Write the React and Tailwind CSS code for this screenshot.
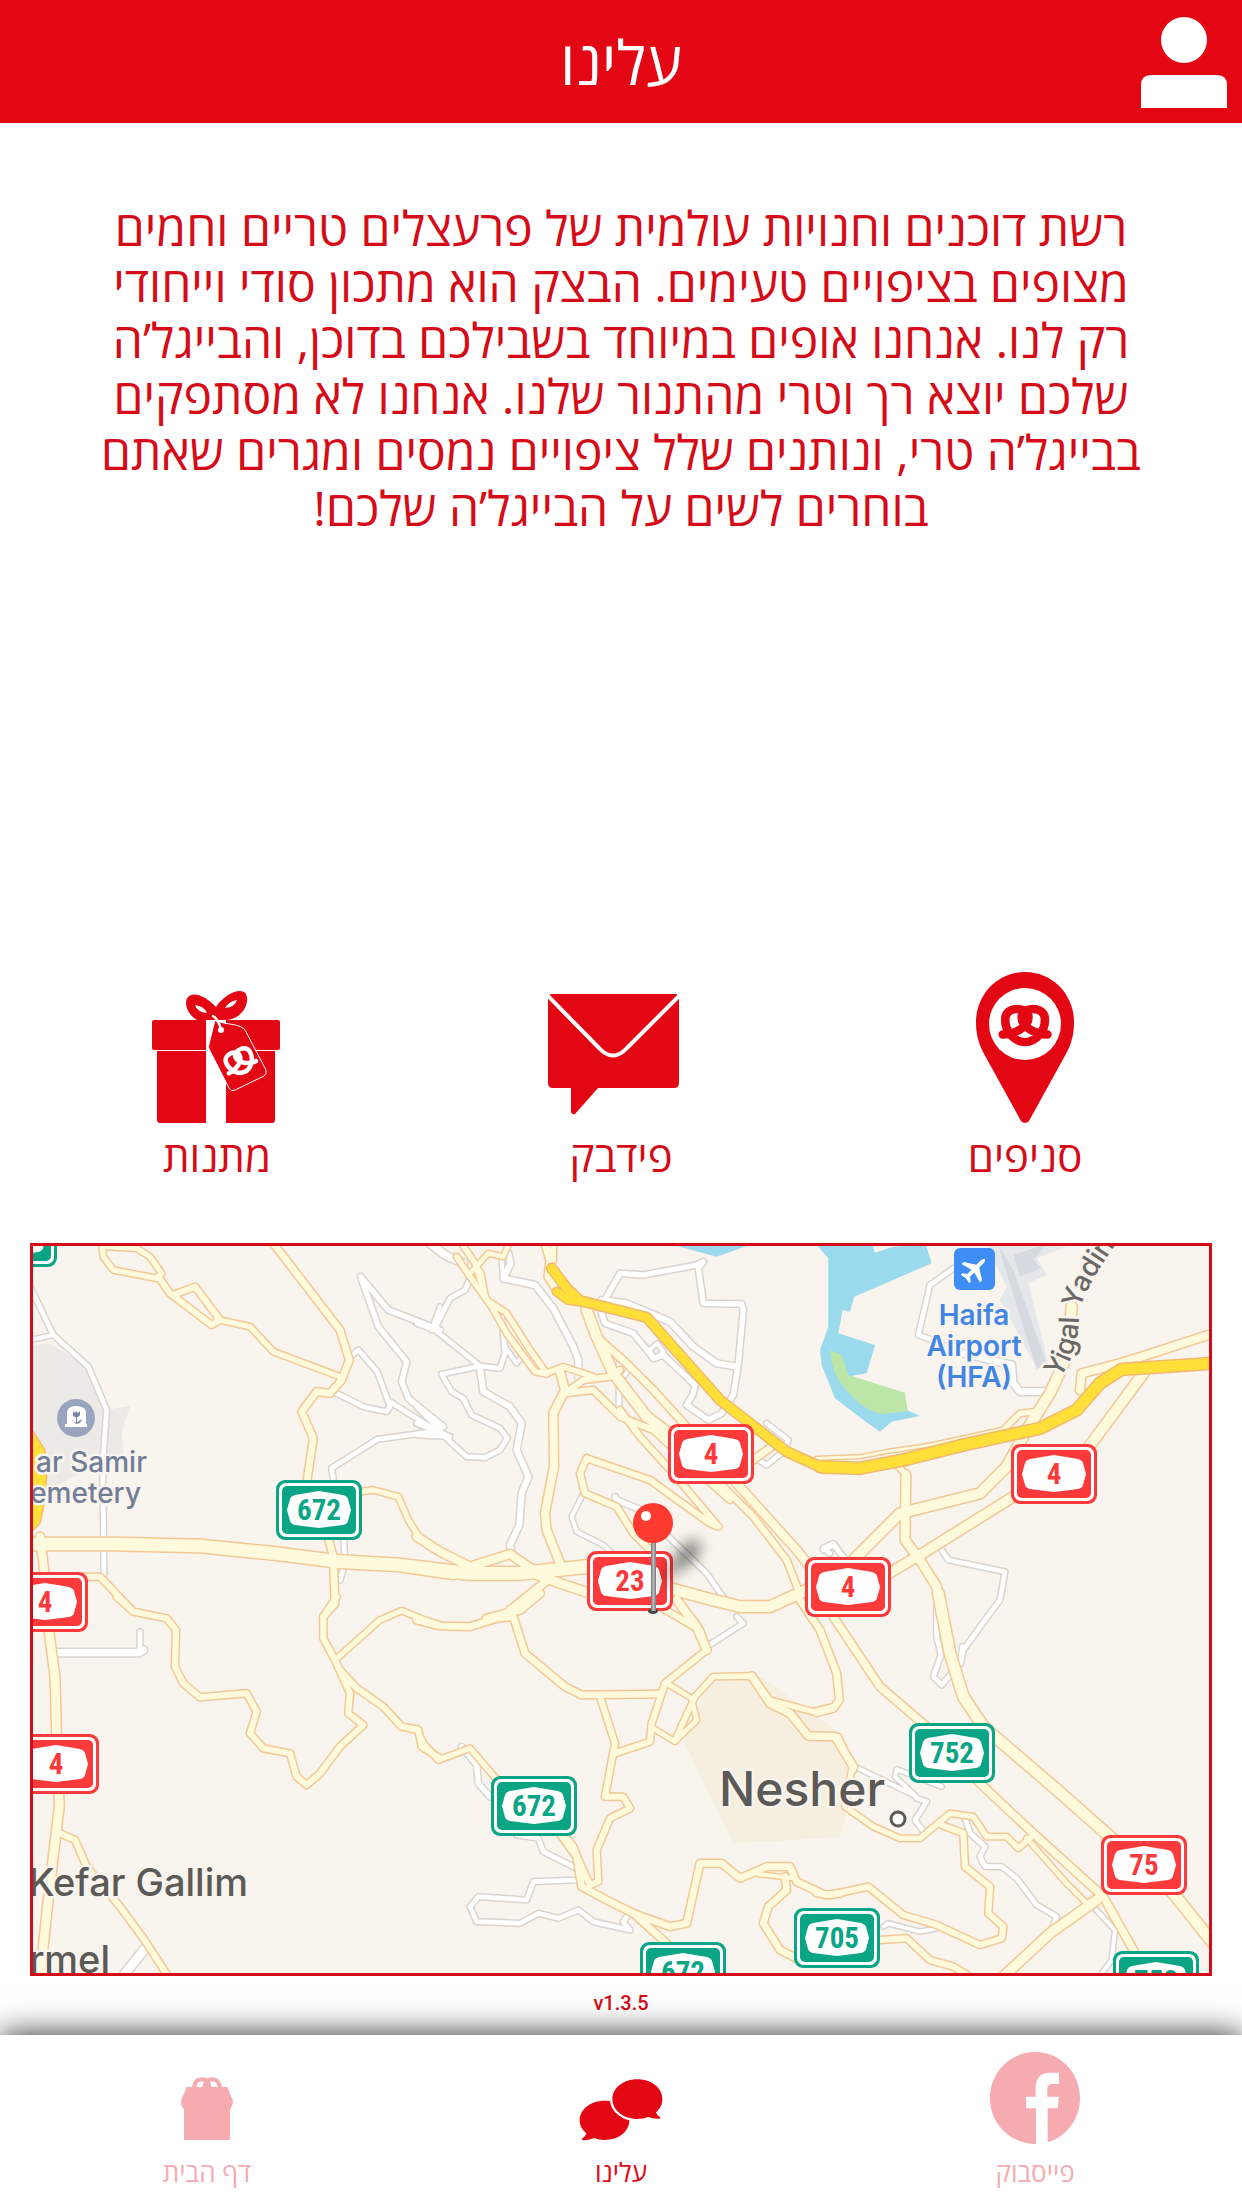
import React from "react";

/* ---------- map data: three drawing units per map pixel ---------- */
const A = [-39, -48];
const B = [1161, -48];
const C = [2361, -48];
const D = [-39, 1062];
const E = [1161, 1062];
const F = [2361, 1062];

const minorRoads = [
  [A, 14, "30 170 100 315 205 410 260 540 248 700 252 1035"],
  [A, 12, "30 330 100 315"],
  [A, 16, "1260 300 1105 240 1022 140 1075 290 1160 395 1145 455 1165 505 1270 590"],
  [A, 14, "985 385 1015 360 1072 425 1110 530 1100 545 1030 530 950 490"],
  [A, 14, "1110 515 1250 603 1072 628 935 715 940 745"],
  [A, 14, "970 900 975 1000 960 1050"],
  [A, 12, "1235 300 1260 230"],
  [B, 22, "30 40 75 75 130 100"],
  [B, 14, "150 145 135 180 90 205 45 295"],
  [B, 14, "-10 280 45 300 180 408 240 415 255 370 245 260"],
  [B, 12, "255 350 290 400 310 375"],
  [B, 14, "180 408 65 433 95 485 130 505 155 555 240 595 262 625 240 660 195 683 140 680 90 635 50 590 -10 530"],
  [B, 14, "-10 580 90 620 -10 615"],
  [B, 18, "180 415 190 485 270 530 305 580 290 660 325 740 305 790 298 885 270 945 275 970"],
  [B, 18, "265 70 272 100 250 145 345 165 400 235 460 350 475 390 475 440"],
  [B, 12, "245 90 250 150"],
  [B, 16, "560 200 600 130 670 135 830 105 850 95 835 115 850 220 965 222 970 240 955 400 940 495 905 550 865 570 800 525 820 490 825 465 730 375 700 385 685 365 640 310 555 280 545 250"],
  [B, 18, "545 210 620 220 750 275 820 350 890 400 950 410"],
  [B, 12, "700 380 688 360 712 340 730 365 710 385"],
  [B, 14, "597 400 597 540"],
  [B, 10, "605 450 625 420"],
  [B, 16, "700 855 590 810 585 800"],
  [B, 12, "490 790 455 860 470 905 550 945 575 970"],
  [B, 14, "740 915 860 1030 915 1110"],
  [B, 14, "1040 580 1105 630 1090 665 1040 705 1015 690"],
  [B, 14, "1230 970 1210 955 1240 940 1265 975"],
  [C, 14, "400 115 330 165 295 315 350 335 400 360"],
  [C, 20, "430 370 575 405 580 460 600 485 690 485"],
  [C, 14, "10 960 40 945 75 985"],
  [C, 14, "365 960 385 990 555 1025 540 1110 495 1170 430 1260 422 1300"],
  [D, 22, "100 158 355 158 370 150"],
  [D, 14, "360 150 360 95"],
  [D, 26, "380 1040 315 1120"],
  [E, 16, "125 440 170 495 175 550 210 590"],
  [E, 14, "290 705 355 715 370 755 470 805"],
  [E, 14, "470 840 340 845 320 900 175 890 150 920 170 965 300 970 355 940 415 955 475 930 520 965 630 990 610 965 628 940"],
  [E, 14, "950 50 970 70 860 140"],
  [F, 14, "350 20 350 110 363 165 340 230 365 255 390 225 420 190 428 140"],
  [F, 12, "105 500 290 590 225 530 230 508 365 560"],
  [F, 14, "290 595 320 605 285 660 315 700"],
  [F, 14, "435 655 450 700 495 740 480 770 495 800 545 800 590 835 650 915 710 950 695 990"],
  [F, 12, "190 980 205 970 300 995 350 985"],
  [F, 12, "815 915 885 990 875 1080 845 1120"],
];

const mainRoads = [
  [A, 16, "245 40 250 80 280 120 410 145 425 130 390 80 350 55 260 50"],
  [A, 18, "415 140 450 190 575 285 600 270 525 170 460 195"],
  [A, 16, "590 268 690 290 760 365 960 440"],
  [A, 20, "760 40 960 300 988 390 965 450 930 490 890 485 845 545 880 625 860 760"],
  [A, 38, "30 942 280 942 540 948 760 970 960 995 1140 1005 1300 1028"],
  [A, 24, "60 920 75 1040"],
  [A, 18, "90 1040 240 1040 335 1140"],
  [A, 16, "1020 785 1060 780 1135 800 1165 870 1200 925 1280 975"],
  [A, 20, "925 925 940 980 945 1120 910 1160"],
  [B, 38, "-20 1010 140 1030 300 1030 500 1010 560 1020"],
  [B, 24, "-10 920 60 965 150 1010 270 972 340 1020"],
  [B, 16, "125 40 165 100 200 210 260 250 330 360 380 430 430 410 520 440"],
  [B, 16, "110 80 150 140 215 230 260 310 345 425 380 432"],
  [B, 14, "150 130 205 70 250 80 265 45"],
  [B, 12, "140 60 185 130 195 190"],
  [B, 22, "375 40 390 90 385 140 410 180"],
  [B, 16, "400 40 400 90"],
  [B, 24, "420 425 435 480 400 550 402 710 375 850 380 900 420 1000"],
  [B, 18, "435 490 490 450 570 440 600 420"],
  [B, 18, "435 490 520 480 600 560 700 600 830 720 930 810"],
  [B, 30, "500 240 530 320 580 430 680 560 760 620"],
  [B, 20, "540 330 620 400 700 480 800 590"],
  [B, 18, "600 540 660 620 760 730 895 890 870 880 690 750 500 685 480 730 495 790 590 830 640 910 700 970"],
  [B, 18, "900 760 1000 860 1100 990 1135 1080"],
  [B, 24, "950 760 1040 860 1130 960 1200 1050"],
  [B, 20, "1000 690 1055 650"],
  [B, 26, "340 1030 420 1060 510 1090"],
  [B, 22, "390 1045 270 1140"],
  [B, 32, "750 1075 860 1105 960 1130 1050 1130 1160 1080"],
  [C, 30, "100 990 240 850 480 790 560 710 620 600 690 490 745 370 755 230"],
  [C, 28, "190 1040 300 975 580 800"],
  [C, 30, "800 660 970 430"],
  [C, 26, "258 735 255 930 300 990 350 1070 365 1160"],
  [C, 16, "225 700 260 735"],
  [C, 16, "550 600 600 550 650 545 690 480"],
  [C, 24, "780 480 785 430 900 400 980 375 1180 310"],
  [C, 8, "-10 685 120 680 200 665 330 645 560 595"],
  [D, 26, "85 80 105 230 110 420 118 620 90 850 60 1130"],
  [D, 18, "290 -10 340 35 440 55 468 90 465 200 490 250 540 292 680 280 710 335 690 400 730 445 810 460 830 530 860 555 900 520 960 440 1030 375 985 340 990 280 945 180 910 115 910 50 950 -10"],
  [D, 16, "945 180 1080 60 1145 32 1200 55 1260 75"],
  [D, 18, "960 210 1010 265 1090 320 1145 380 1195 390 1205 440 1260 475"],
  [D, 18, "120 700 165 720 200 800 300 920 370 1015 445 1130"],
  [E, 20, "-10 60 60 78 150 80 230 55 280 50 315 160 435 260 485 285 720 282"],
  [E, 22, "200 55 300 30 360 -20"],
  [E, 18, "540 290 585 430 555 590 610 590 630 625 570 655 530 750 535 845 510 855 480 790 460 740 420 690"],
  [E, 18, "585 460 690 425 695 370 735 250 860 150 840 90 720 20"],
  [E, 24, "770 0 830 80 860 150"],
  [E, 14, "740 250 815 295 830 360 765 425 700 385"],
  [E, 16, "765 420 825 290 880 230 995 228 1050 300 1180 335 1240 320"],
  [E, 22, "995 228 1050 310 1110 340 1165 408 1245 410 1300 500"],
  [E, 16, "-10 385 10 430 55 480 150 445 240 550"],
  [E, 20, "420 700 470 770 485 860 560 900 640 940 750 980 800 970 840 790 905 790 960 835 1040 800 1110 800 1130 845 1215 885 1260 880"],
  [E, 12, "1000 820 1120 835"],
  [E, 20, "1095 830 1100 870 1045 920 1030 970 1080 1050 1130 1075"],
  [E, 20, "640 940 740 1030"],
  [E, 20, "1140 0 1200 90 1250 220 1258 300 1240 325 1190 338"],
  [F, 22, "40 50 180 260 320 380 480 550 640 700 850 890 940 1050"],
  [F, 32, "355 -20 390 160 430 290 490 380 700 560 870 710 1060 880 1180 1030"],
  [F, 16, "95 510 75 620 160 680 240 715 300 715 390 640 460 650 500 710 560 710 595 745 640 705"],
  [F, 14, "620 715 740 850 800 910 840 890"],
  [F, 28, "550 1130 690 1000 830 900"],
  [F, 18, "365 675 430 700 435 800 510 860 505 940 550 980 545 1015 480 1035 350 975 250 945 145 860 30 885 -10 880"],
  [F, 18, "180 1020 260 1015 330 1080 400 1100 450 1130"],
  [F, 16, "55 410 100 510"],
];

const highways = [
  [B, 26, "395 115 440 175 480 212 680 262 900 510 1100 665 1210 715 1320 715"],
  [B, 22, "410 185 445 210 480 215"],
  [C, 32, "0 710 120 715 250 690 430 645 660 595 770 540 840 460 905 418 1180 400"],
];

const shields = [
  [-62, -39, "g", ""],
  [243, 234, "g", "672"],
  [635, 178, "r", "4"],
  [554, 305, "r", "23"],
  [772, 311, "r", "4"],
  [978, 198, "r", "4"],
  [-31, 326, "r", "4"],
  [-20, 488, "r", "4"],
  [458, 530, "g", "672"],
  [607, 696, "g", "672"],
  [761, 662, "g", "705"],
  [876, 477, "g", "752"],
  [1068, 589, "r", "75"],
  [1080, 705, "g", "752"],
];

function Roads({ roads, casing, fill }) {
  return (
    <g fill="none" strokeLinejoin="round" strokeLinecap="round">
      {roads.map(([o, w, p], i) => (
        <polyline key={"c" + i} points={p} stroke={casing} strokeWidth={w + 9} transform={`translate(${o[0]} ${o[1]})`} />
      ))}
      {roads.map(([o, w, p], i) => (
        <polyline key={"f" + i} points={p} stroke={fill} strokeWidth={w} transform={`translate(${o[0]} ${o[1]})`} />
      ))}
    </g>
  );
}

function Shield({ x, y, kind, label }) {
  const color = kind === "g" ? "#0aa585" : "#fc3a3c";
  return (
    <g transform={`translate(${x} ${y})`}>
      <rect width="86" height="60" rx="9" fill={color} />
      <rect x="3" y="3" width="80" height="54" rx="7" fill="#fff" />
      <rect x="6" y="6" width="74" height="48" rx="5" fill={color} />
      <path d="M43 11 L67 15 Q71 16 72 19 L75 30 L72 41 Q71 44 67 45 L43 48 L19 45 Q15 44 14 41 L11 30 L14 19 Q15 16 19 15 Z" fill="#fff" />
      {label && (
        <text x="43" y="40" textAnchor="middle" fill={color} className="font-['Roboto_Condensed','Roboto',sans-serif] text-[29px] font-bold">
          {label}
        </text>
      )}
    </g>
  );
}

function MapView() {
  const halo = { paintOrder: "stroke" };
  return (
    <svg viewBox="0 0 1176 727" className="block h-auto w-full bg-[#f9f4ed] font-['Inter',sans-serif]" role="img" aria-label="Map">
      <defs>
        <filter id="soft" x="-50%" y="-50%" width="200%" height="200%">
          <feGaussianBlur stdDeviation="7" />
        </filter>
        <linearGradient id="stick" x1="0" x2="1">
          <stop offset="0" stopColor="#777" />
          <stop offset=".5" stopColor="#bbb" />
          <stop offset="1" stopColor="#777" />
        </linearGradient>
        <path id="yadin" d="M1026 133 C1040 115 1046 92 1046 70 C1050 45 1065 25 1088 -10" />
      </defs>
      <g transform="scale(.33333)">
        <path transform="translate(-39 -48)" d="M30 350 L85 340 L200 405 L260 540 L330 527 L305 610 L312 670 L80 780 L30 700 Z" fill="#ebeae7" />
        <path transform="translate(-39 -48)" d="M30 590 L75 660 Q90 760 60 880 L30 910 Z" fill="#ffdf38" stroke="#f2b872" strokeWidth="4" />
        <path transform="translate(1161 1062)" d="M870 240 L1000 215 L1260 400 L1290 500 L1300 560 L1260 710 L1080 722 L940 728 L790 420 Z" fill="#f6eedf" />
        <path transform="translate(1161 -48)" d="M760 45 L890 80 L990 45 Z" fill="#9bd9ed" />
        <path transform="translate(2361 -48)" d="M-10 45 L25 85 L25 290 L0 360 L5 405 L45 505 L130 570 L180 605 L215 575 L300 558 L260 540 L80 440 L140 430 L165 345 L55 310 L68 240 L90 245 L103 200 L335 100 L318 45 L220 50 L165 68 L158 45 Z" fill="#9bd9ed" />
        <path transform="translate(2361 -48)" d="M30 360 L65 375 L85 435 L255 488 L263 543 L190 552 Q130 545 70 470 Q35 430 30 360 Z" fill="#bde5a8" />
        <g transform="translate(2361 -48)">
          <path d="M500 40 L740 50 L650 85 L680 135 L625 160 L685 400 L650 415 L540 210 L560 170 L525 100 Z" fill="#e5e8eb" />
          <path d="M535 45 L580 120 L680 400 L650 418 L560 130 Z M580 75 L680 42 L640 90 L665 115 L600 140 Z" fill="#d4dae0" />
        </g>
        <Roads roads={minorRoads} casing="#d9d4d0" fill="#ffffff" />
        <Roads roads={mainRoads} casing="#f3c896" fill="#fffadb" />
        <Roads roads={highways} casing="#f2b872" fill="#ffdf38" />
      </g>

      <g stroke="#f9f4ed" strokeWidth="5" strokeLinejoin="round">
        <g fill="#727d98" textAnchor="end" className="text-[28px] font-medium" style={halo}>
          <text x="114" y="226">ar Samir</text>
          <text x="108" y="257">emetery</text>
        </g>
        <g fill="#5c5a56" textAnchor="end" className="text-[38px] font-medium" style={halo}>
          <text x="215" y="650">Kefar Gallim</text>
          <text x="77" y="727">rmel</text>
        </g>
        <text x="686" y="560" fill="#5c5a56" className="text-[48px] font-medium" style={halo}>Nesher</text>
        <g fill="#4285e4" textAnchor="middle" className="text-[28px] font-semibold" style={halo}>
          <text x="941" y="79">Haifa</text>
          <text x="941" y="110">Airport</text>
          <text x="941" y="141">(HFA)</text>
        </g>
        <text fill="#6b6966" className="text-[28px] font-medium" style={halo}>
          <textPath href="#yadin">Yigal Yadin</textPath>
        </text>
      </g>
      <circle cx="865" cy="573" r="7" fill="#fff" stroke="#5c5a56" strokeWidth="3" />

      <g transform="translate(16 124)">
        <circle cx="27" cy="48" r="19" fill="#9ba4bf" />
        <path d="M16 57 V54 H18 V42 Q19 36 27 36 Q36 36 37 42 V54 H38 V57 Z" fill="#fff" />
        <path d="M24 41 L26 43 L27 41 L29 43 L31 41 V45 Q30 47 28 47 V54 H27 V47 Q24 47 24 45 Z M22 49 L27 53 L33 49 L31 53 L27 54 Z" fill="#7884a4" />
      </g>
      <rect x="921" y="2" width="41" height="42" rx="6" fill="#3f8ef7" />
      <path transform="translate(928 9) rotate(45 14 14)" d="M14 0 Q16 1 16 4 V10 L27 17 V20 L16 17 V23 L20 26 V28 L14 27 L8 28 V26 L12 23 V17 L1 20 V17 L12 10 V4 Q12 1 14 0 Z" fill="#fff" />

      {shields.map(([x, y, kind, label], i) => (
        <Shield key={i} x={x} y={y} kind={kind} label={label} />
      ))}

      <path d="M621 345 L650 298 Q672 288 667 305 Q662 320 648 322 Z" fill="#000" opacity=".45" filter="url(#soft)" />
      <ellipse cx="620" cy="365" rx="5" ry="3" fill="#444" />
      <rect x="618" y="296" width="5" height="69" fill="url(#stick)" />
      <circle cx="620" cy="277" r="20" fill="#ff3a2f" />
      <circle cx="613" cy="270" r="5" fill="#fff" />
    </svg>
  );
}

/* ---------- icons ---------- */
function Pretzel({ width = 8, ...rest }) {
  return (
    <g fill="none" stroke="currentColor" strokeWidth={width} strokeLinecap="round" {...rest}>
      <path d="M2 34 C14 34 32 26 32 13 C32 1 6 -1 5 15 C4 30 16 43 28 43 C40 43 52 30 51 15 C50 -1 24 1 24 13 C24 26 42 34 54 34" />
    </g>
  );
}

function PinIcon() {
  return (
    <svg viewBox="0 0 100 152" className="h-[152px] w-[100px]">
      <path d="M50 0 C78 0 99 23 99 50 C99 61 97 70 92 80 L54 149 Q50 153 46 149 L8 80 C3 70 1 61 1 50 C1 23 22 0 50 0 Z" fill="currentColor" />
      <circle cx="50" cy="52" r="36" fill="#fff" />
      <Pretzel width={10} transform="translate(26 34) scale(.86 .84)" />
    </svg>
  );
}

function FeedbackIcon() {
  return (
    <svg viewBox="0 0 147 130" className="h-[130px] w-[147px]">
      <path d="M4 0 H127 Q131 0 131 4 V89 Q131 94 126 94 V94 H50 L27 120 Q24 121 23 118 V94 H5 Q0 94 0 89 V4 Q0 0 4 0 Z" fill="currentColor" />
      <path d="M-1 1 L51 54 Q65 69 79 54 L132 1" fill="none" stroke="#fff" strokeWidth="4" />
    </svg>
  );
}

function GiftIcon() {
  return (
    <svg viewBox="0 0 130 134" className="h-[134px] w-[130px]">
      <g fill="currentColor">
        <path d="M2 30 H54 V60 H2 Q0 60 0 58 V32 Q0 30 2 30 Z M74 30 H126 Q128 30 128 32 V58 Q128 60 126 60 H74 Z" />
        <path d="M5 61 H54 V133 H8 Q5 133 5 130 Z M74 61 H123 V130 Q123 133 120 133 H74 Z" />
        <path d="M64 17 C54 6 41 1 36 7 C31 13 36 25 45 30 H75 C91 28 98 13 94 4 C88 -4 71 6 64 17 Z" />
        <path d="M63 30 Q64 32 78 34 Q91 36 93 40 L114 80 Q115 84 112 86 L83 100 Q79 102 77 98 L57 59 Q56 57 57 54 Z" stroke="#fff" strokeWidth="1" />
      </g>
      <path d="M43 15 Q52 16 55 23 Q45 22 43 15 Z M85 10 Q77 11 73 18 Q83 17 85 10 Z" fill="#fff" />
      <path d="M61 26 Q66 29 69 39" fill="none" stroke="#fff" strokeWidth="2.5" strokeLinecap="round" />
      <circle cx="69" cy="40" r="3" fill="#fff" />
      <g className="text-white">
        <Pretzel transform="translate(68 66) rotate(-24) scale(.57)" />
      </g>
    </svg>
  );
}

function BagIcon() {
  return (
    <svg viewBox="60 66 162 216" className="h-[72px] w-[54px]">
      <path d="M80 111 H202 L218 150 Q221 163 210 178 V270 H72 V178 Q60 165 64 150 Z" fill="currentColor" />
      <path d="M102 116 Q103 88 126 88 Q148 88 148 116 M134 116 Q134 88 156 88 Q178 88 180 116" fill="none" stroke="currentColor" strokeWidth="12" />
    </svg>
  );
}

function ChatIcon() {
  return (
    <svg viewBox="1254 84 258 198" className="h-[66px] w-[86px]">
      <path d="M1334 152 C1376 152 1408 178 1408 211 C1408 245 1376 270 1334 270 Q1316 270 1302 264 Q1285 272 1267 270 Q1264 268 1268 264 Q1277 259 1279 250 C1266 240 1259 227 1259 211 C1259 178 1292 152 1334 152 Z" fill="currentColor" />
      <path d="M1432 88 C1474 88 1507 114 1507 147 C1507 163 1500 177 1488 187 Q1490 196 1499 200 Q1503 204 1499 206 Q1482 208 1465 201 Q1450 207 1432 207 C1391 207 1357 181 1357 147 C1357 114 1391 88 1432 88 Z" fill="currentColor" stroke="#fff" strokeWidth="14" paintOrder="stroke" />
    </svg>
  );
}

function FacebookIcon() {
  return (
    <svg viewBox="90 36 270 276" className="h-[92px] w-[90px]">
      <path d="M225 36 C300 36 360 98 360 174 C360 235 322 289 263 307 V205 H293 L297 170 H262 V147 Q262 132 277 132 H297 V98 H270 Q227 98 227 145 V170 H198 V205 H228 V312 C150 312 90 250 90 174 C90 98 150 36 225 36 Z" fill="currentColor" />
    </svg>
  );
}

const actions = [
  ["סניפים", PinIcon],
  ["פידבק", FeedbackIcon],
  ["מתנות", GiftIcon],
];

const tabs = [
  ["פייסבוק", FacebookIcon, false],
  ["עלינו", ChatIcon, true],
  ["דף הבית", BagIcon, false],
];

const lines = [
  "רשת דוכנים וחנויות עולמית של פרעצלים טריים וחמים",
  "מצופים בציפויים טעימים. הבצק הוא מתכון סודי וייחודי",
  "רק לנו. אנחנו אופים במיוחד בשבילכם בדוכן, והבייגל’ה",
  "שלכם יוצא רך וטרי מהתנור שלנו. אנחנו לא מסתפקים",
  "בבייגל’ה טרי, ונותנים שלל ציפויים נמסים ומגרים שאתם",
  "בוחרים לשים על הבייגל’ה שלכם!",
];

export default function App() {
  return (
    <div dir="rtl" className="flex min-h-screen flex-col bg-white font-['Open_Sans','Liberation_Sans',sans-serif] text-[#e30613]">
      <header className="grid h-[123px] grid-cols-[1fr_auto_1fr] items-center bg-[#e30613] px-[15px] text-white">
        <button aria-label="פרופיל" className="justify-self-start">
          <svg viewBox="0 0 86 92" className="h-[92px] w-[86px]" fill="currentColor">
            <circle cx="43" cy="24" r="23" />
            <path d="M10 59 H76 Q86 59 86 69 V92 H0 V69 Q0 59 10 59 Z" />
          </svg>
        </button>
        <h1 className="text-[61px] leading-[80px] font-medium">עלינו</h1>
      </header>

      <main className="flex flex-1 flex-col">
        <p className="flex-1 pt-[77px] text-center text-[48px] leading-[56px] font-medium text-[#d60b18]">
          {lines.map((line) => (
            <span key={line} className="block">{line}</span>
          ))}
        </p>

        <div className="grid grid-cols-3 px-[15px]">
          {actions.map(([label, Icon]) => (
            <button key={label} className="flex flex-col items-center">
              <span className="flex h-[152px] items-end justify-center">
                <Icon />
              </span>
              <span className="text-[42px] leading-[64px] font-medium text-[#d60b18]">{label}</span>
            </button>
          ))}
        </div>

        <div className="mx-[30px] mt-[55px] overflow-hidden border-[3px] border-[#d60b18]" dir="ltr">
          <MapView />
        </div>

        <p dir="ltr" className="pt-2 pb-3 text-center font-['Roboto',sans-serif] text-[20px] leading-[39px] font-medium text-[#d60b18]">v1.3.5</p>
      </main>

      <nav className="relative grid grid-cols-3 bg-white pt-[17px] shadow-[0_0_30px_rgba(0,0,0,0.85)]">
        {tabs.map(([label, Icon, active]) => (
          <a key={label} href="#" aria-current={active ? "page" : undefined} className={active ? "flex flex-col items-center text-[#e30613]" : "flex flex-col items-center text-[#f5abb0]"}>
            <span className="flex h-[92px] items-end">
              <Icon />
            </span>
            <span className="pt-2 pb-4 text-[26px] leading-[40px] font-medium">{label}</span>
          </a>
        ))}
      </nav>
    </div>
  );
}
